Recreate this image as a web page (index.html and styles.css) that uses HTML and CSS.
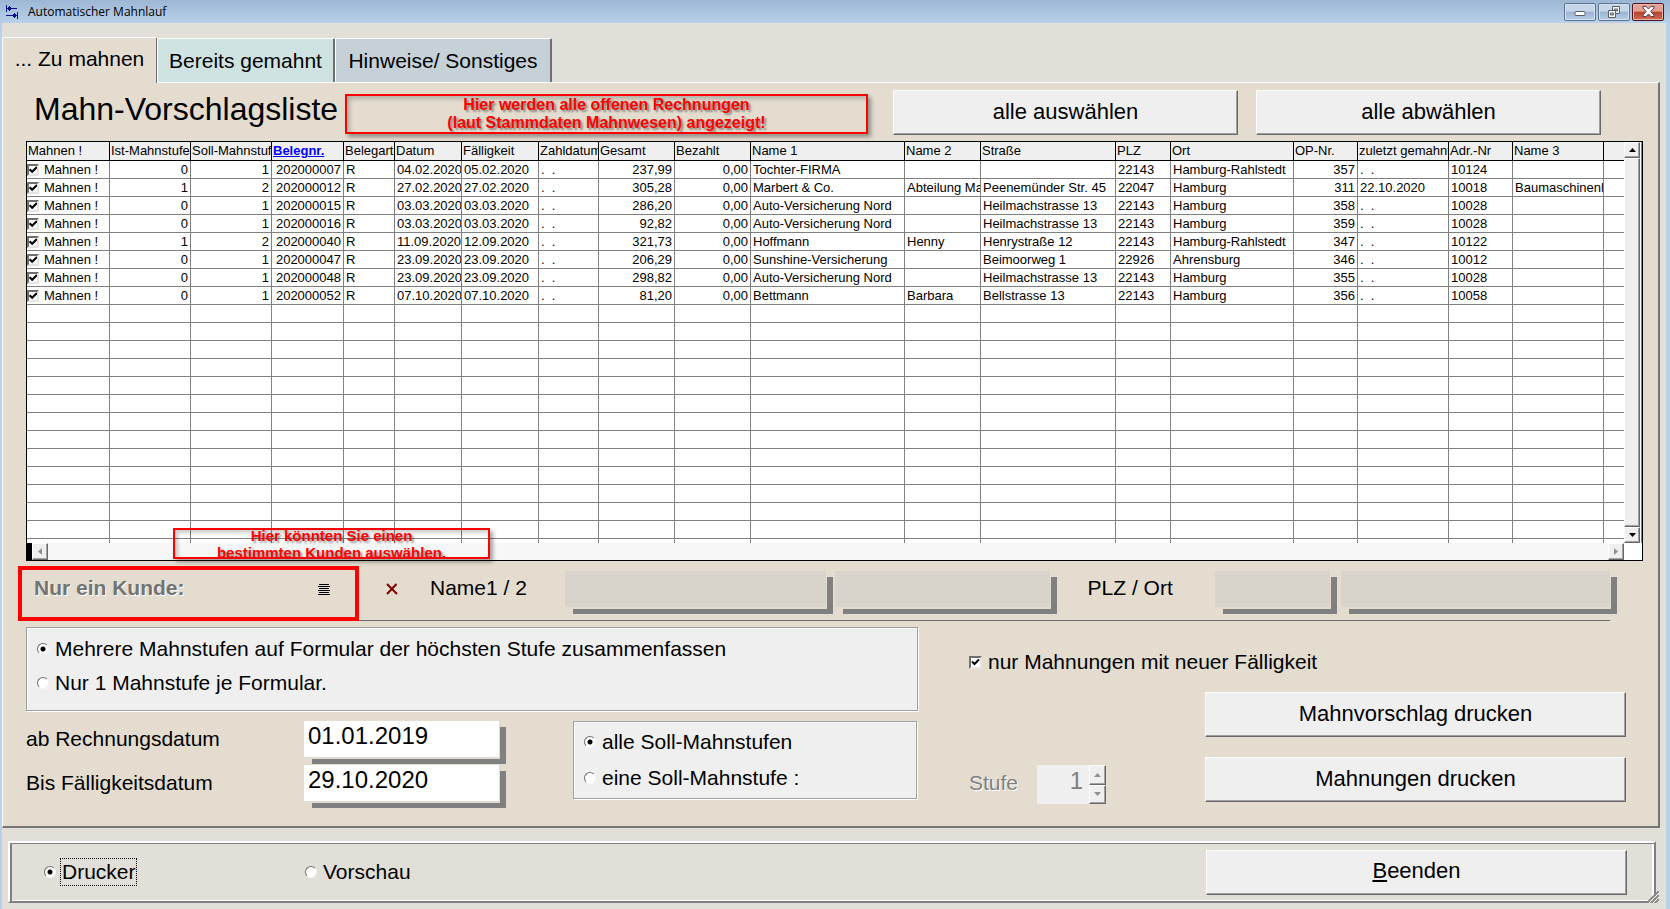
FILE: index.html
```html
<!DOCTYPE html>
<html lang="de">
<head>
<meta charset="utf-8">
<title>Automatischer Mahnlauf</title>
<link rel="stylesheet" href="styles.css">
</head>
<body>
<div class="window">
  <header class="titlebar">
    <svg class="app-icon" width="12" height="14" viewBox="0 0 12 14" fill="#10108c" shape-rendering="crispEdges"><path d="M0 0h1v7H0zM1 3h10v1H1zM2 2h3v3H2zM3 1h1v5H3zM11 7h1v7h-1zM0 10h11v1H0zM7 9h3v3H7zM8 8h1v5H8z"/></svg>
    <span class="title">Automatischer Mahnlauf</span>
    <div class="window-buttons">
      <button class="winbtn" aria-label="Minimieren"><svg width="12" height="12" viewBox="0 0 12 12"><rect x="1" y="5.500" width="10" height="4" rx="1" fill="#fff" stroke="#55606e"/></svg></button>
      <button class="winbtn" aria-label="Wiederherstellen"><svg width="12" height="12" viewBox="0 0 12 12" fill="#fff" stroke="#55606e"><path d="M4.500.5h7v7h-7z"/><path d="M6.500 3h3v2h-3z" fill="#a9c0da"/><path d="M.5 4.500h7v7h-7z"/><path d="M2.500 7h3v2h-3z" fill="#a9c0da"/></svg></button>
      <button class="winbtn winbtn-close" aria-label="Schließen"><svg width="13" height="11" viewBox="0 0 13 11"><path d="M1 .5h3l2.500 2.500L9 .5h3v1.500L8.800 5.500 12 9v1.500H9L6.500 8 4 10.500H1V9l3.200-3.500L1 2z" fill="#fff" stroke="#55404c"/></svg></button>
    </div>
  </header>

  <main class="client">
    <nav class="tabs">
      <button class="tab tab-active">... Zu mahnen</button>
      <button class="tab tab-done">Bereits gemahnt</button>
      <button class="tab tab-notes">Hinweise/ Sonstiges</button>
    </nav>

    <section class="panel">
      <div class="panel-head">
        <h1>Mahn-Vorschlagsliste</h1>
        <p class="callout callout-list">Hier werden alle offenen Rechnungen<br>(laut Stammdaten Mahnwesen) angezeigt!</p>
        <div class="head-buttons">
          <button class="btn">alle auswählen</button>
          <button class="btn">alle abwählen</button>
        </div>
      </div>

      <div class="grid">
        <div class="grid-view">
          <table>
            <colgroup><col class="w83"><col class="w81"><col class="w81"><col class="w72"><col class="w51"><col class="w67"><col class="w77"><col class="w60"><col class="w76"><col class="w76"><col class="w154"><col class="w76"><col class="w135"><col class="w55"><col class="w123"><col class="w64"><col class="w91"><col class="w64"><col class="w91"><col></colgroup>
            <thead>
              <tr><th>Mahnen !<th>Ist-Mahnstufe<th>Soll-Mahnstufe<th><a class="sorted" href="#">Belegnr.</a><th>Belegart<th>Datum<th>Fälligkeit<th>Zahldatum<th>Gesamt<th>Bezahlt<th>Name 1<th>Name 2<th>Straße<th>PLZ<th>Ort<th>OP-Nr.<th>zuletzt gemahnt<th>Adr.-Nr<th>Name 3<th></tr>
            </thead>
            <tbody>
              <tr><td><label class="pick"><input type="checkbox" class="check" checked>Mahnen !</label><td class="num">0<td class="num">1<td class="num">202000007<td>R<td>04.02.2020<td>05.02.2020<td>.&nbsp; .<td class="num">237,99<td class="num">0,00<td>Tochter-FIRMA<td><td><td>22143<td>Hamburg-Rahlstedt<td class="num">357<td>.&nbsp; .<td>10124<td><td></tr>
              <tr><td><label class="pick"><input type="checkbox" class="check" checked>Mahnen !</label><td class="num">1<td class="num">2<td class="num">202000012<td>R<td>27.02.2020<td>27.02.2020<td>.&nbsp; .<td class="num">305,28<td class="num">0,00<td>Marbert &amp; Co.<td>Abteilung Mahn<td>Peenemünder Str. 45<td>22047<td>Hamburg<td class="num">311<td>22.10.2020<td>10018<td>Baumaschinenh<td></tr>
              <tr><td><label class="pick"><input type="checkbox" class="check" checked>Mahnen !</label><td class="num">0<td class="num">1<td class="num">202000015<td>R<td>03.03.2020<td>03.03.2020<td>.&nbsp; .<td class="num">286,20<td class="num">0,00<td>Auto-Versicherung Nord<td><td>Heilmachstrasse 13<td>22143<td>Hamburg<td class="num">358<td>.&nbsp; .<td>10028<td><td></tr>
              <tr><td><label class="pick"><input type="checkbox" class="check" checked>Mahnen !</label><td class="num">0<td class="num">1<td class="num">202000016<td>R<td>03.03.2020<td>03.03.2020<td>.&nbsp; .<td class="num">92,82<td class="num">0,00<td>Auto-Versicherung Nord<td><td>Heilmachstrasse 13<td>22143<td>Hamburg<td class="num">359<td>.&nbsp; .<td>10028<td><td></tr>
              <tr><td><label class="pick"><input type="checkbox" class="check" checked>Mahnen !</label><td class="num">1<td class="num">2<td class="num">202000040<td>R<td>11.09.2020<td>12.09.2020<td>.&nbsp; .<td class="num">321,73<td class="num">0,00<td>Hoffmann<td>Henny<td>Henrystraße 12<td>22143<td>Hamburg-Rahlstedt<td class="num">347<td>.&nbsp; .<td>10122<td><td></tr>
              <tr><td><label class="pick"><input type="checkbox" class="check" checked>Mahnen !</label><td class="num">0<td class="num">1<td class="num">202000047<td>R<td>23.09.2020<td>23.09.2020<td>.&nbsp; .<td class="num">206,29<td class="num">0,00<td>Sunshine-Versicherung<td><td>Beimoorweg 1<td>22926<td>Ahrensburg<td class="num">346<td>.&nbsp; .<td>10012<td><td></tr>
              <tr><td><label class="pick"><input type="checkbox" class="check" checked>Mahnen !</label><td class="num">0<td class="num">1<td class="num">202000048<td>R<td>23.09.2020<td>23.09.2020<td>.&nbsp; .<td class="num">298,82<td class="num">0,00<td>Auto-Versicherung Nord<td><td>Heilmachstrasse 13<td>22143<td>Hamburg<td class="num">355<td>.&nbsp; .<td>10028<td><td></tr>
              <tr><td><label class="pick"><input type="checkbox" class="check" checked>Mahnen !</label><td class="num">0<td class="num">1<td class="num">202000052<td>R<td>07.10.2020<td>07.10.2020<td>.&nbsp; .<td class="num">81,20<td class="num">0,00<td>Bettmann<td>Barbara<td>Bellstrasse 13<td>22143<td>Hamburg<td class="num">356<td>.&nbsp; .<td>10058<td><td></tr>
              <tr><td><td><td><td><td><td><td><td><td><td><td><td><td><td><td><td><td><td><td><td></tr>
              <tr><td><td><td><td><td><td><td><td><td><td><td><td><td><td><td><td><td><td><td><td></tr>
              <tr><td><td><td><td><td><td><td><td><td><td><td><td><td><td><td><td><td><td><td><td></tr>
              <tr><td><td><td><td><td><td><td><td><td><td><td><td><td><td><td><td><td><td><td><td></tr>
              <tr><td><td><td><td><td><td><td><td><td><td><td><td><td><td><td><td><td><td><td><td></tr>
              <tr><td><td><td><td><td><td><td><td><td><td><td><td><td><td><td><td><td><td><td><td></tr>
              <tr><td><td><td><td><td><td><td><td><td><td><td><td><td><td><td><td><td><td><td><td></tr>
              <tr><td><td><td><td><td><td><td><td><td><td><td><td><td><td><td><td><td><td><td><td></tr>
              <tr><td><td><td><td><td><td><td><td><td><td><td><td><td><td><td><td><td><td><td><td></tr>
              <tr><td><td><td><td><td><td><td><td><td><td><td><td><td><td><td><td><td><td><td><td></tr>
              <tr><td><td><td><td><td><td><td><td><td><td><td><td><td><td><td><td><td><td><td><td></tr>
              <tr><td><td><td><td><td><td><td><td><td><td><td><td><td><td><td><td><td><td><td><td></tr>
              <tr><td><td><td><td><td><td><td><td><td><td><td><td><td><td><td><td><td><td><td><td></tr>
              <tr class="stub"><td><td><td><td><td><td><td><td><td><td><td><td><td><td><td><td><td><td><td><td></tr>
            </tbody>
          </table>
        </div>
        <div class="vscroll">
          <button class="arrow" aria-label="Nach oben"><svg width="7" height="4" viewBox="0 0 7 4"><path d="M3.500 0L7 4H0z"/></svg></button>
          <div class="thumb"></div>
          <button class="arrow" aria-label="Nach unten"><svg width="7" height="4" viewBox="0 0 7 4"><path d="M3.500 4L7 0H0z"/></svg></button>
        </div>
        <div class="hscroll">
          <span class="splitter"></span>
          <button class="arrow" aria-label="Nach links" disabled><svg width="4" height="7" viewBox="0 0 4 7"><path d="M0 3.500L4 0v7z"/></svg></button>
          <span class="track"></span>
          <button class="arrow" aria-label="Nach rechts" disabled><svg width="4" height="7" viewBox="0 0 4 7"><path d="M4 3.500L0 0v7z"/></svg></button>
        </div>
        <p class="callout callout-customer">Hier könnten Sie einen<br>bestimmten Kunden auswählen.</p>
      </div>

      <div class="customer">
        <div class="customer-pick">
          <span class="customer-label">Nur ein Kunde:</span>
          <button class="plain" aria-label="Kundenliste"><svg width="12" height="11" viewBox="0 0 12 11" shape-rendering="crispEdges"><path d="M1 0h10v1H1zM0 2h12v1H0zM1 4h10v1H1zM0 6h12v1H0zM1 8h10v1H1zM0 10h12v1H0z"/></svg></button>
        </div>
        <div class="filter">
          <button class="plain" aria-label="Kunde löschen"><svg width="12" height="12" viewBox="0 0 12 12" fill="none" stroke="#800000" stroke-width="2"><path d="M1 1l10 10M10.500 1L1 11"/></svg></button>
          <label for="name1">Name1 / 2</label>
          <span class="field field-name1"><input id="name1" type="text" disabled></span>
          <span class="field field-name2"><input type="text" aria-label="Name 2" disabled></span>
          <label for="plz">PLZ / Ort</label>
          <span class="field field-plz"><input id="plz" type="text" disabled></span>
          <span class="field"><input type="text" aria-label="Ort" disabled></span>
        </div>
      </div>

      <div class="options">
        <div class="options-left">
          <div class="group group-forms">
            <label class="choice"><input type="radio" class="radio" name="form" checked>Mehrere Mahnstufen auf Formular der höchsten Stufe zusammenfassen</label>
            <label class="choice"><input type="radio" class="radio" name="form">Nur 1 Mahnstufe je Formular.</label>
          </div>
          <div class="dates-row">
            <div class="dates">
              <label for="from">ab Rechnungsdatum</label>
              <span class="field"><input id="from" type="text" value="01.01.2019"></span>
              <label for="until">Bis Fälligkeitsdatum</label>
              <span class="field"><input id="until" type="text" value="29.10.2020"></span>
            </div>
            <div class="group group-levels">
              <label class="choice"><input type="radio" class="radio" name="level" checked>alle Soll-Mahnstufen</label>
              <label class="choice"><input type="radio" class="radio" name="level">eine Soll-Mahnstufe :</label>
            </div>
          </div>
        </div>
        <div class="options-right">
          <label class="choice new-due"><input type="checkbox" class="check" checked>nur Mahnungen mit neuer Fälligkeit</label>
          <button class="btn btn-wide">Mahnvorschlag drucken</button>
          <div class="level-row">
            <label class="level-label" for="stufe">Stufe</label>
            <div class="spinner">
              <input id="stufe" type="text" value="1" disabled>
              <div class="spin-buttons">
                <button class="arrow" aria-label="Erhöhen" disabled><svg width="7" height="4" viewBox="0 0 7 4"><path d="M3.500 0L7 4H0z"/></svg></button>
                <button class="arrow" aria-label="Verringern" disabled><svg width="7" height="4" viewBox="0 0 7 4"><path d="M3.500 4L7 0H0z"/></svg></button>
              </div>
            </div>
            <button class="btn btn-wide">Mahnungen drucken</button>
          </div>
        </div>
      </div>
    </section>

    <footer class="footer">
      <label class="choice target"><input type="radio" class="radio" name="target" checked><span class="focused">Drucker</span></label>
      <label class="choice target"><input type="radio" class="radio" name="target">Vorschau</label>
      <button class="btn btn-wide btn-exit"><u>B</u>eenden</button>
      <svg class="grip" width="12" height="12" viewBox="0 0 12 12" fill="none"><path d="M0 12L12 0M4 12l8-8M8 12l4-4" stroke="#8a8a86" stroke-width="2"/><path d="M2 12L12 2M6 12l6-6" stroke="#fff"/></svg>
    </footer>
  </main>
</div>
</body>
</html>
```

FILE: styles.css
```css
* { box-sizing: border-box; }

body {
  margin: 0;
  background: #b9d1ea;
  color: #000;
  font-family: "Liberation Sans", Arial, sans-serif;
  font-size: 21px;
}

button, input { font: inherit; color: inherit; }
button { padding: 0; border: 0; background: none; }

.window {
  display: flex;
  flex-direction: column;
  min-height: 100vh;
  padding: 0 4px 0 2px;
}

/* Title bar */
.titlebar {
  display: flex;
  align-items: center;
  height: 23px;
  margin: 0 -4px 0 -2px;
  padding: 0 6px;
  background: linear-gradient(#9cb6d4, #b8d1ea);
}
.title {
  flex: 1;
  margin-left: 10px;
  font-family: "Open Sans", "Noto Sans", sans-serif;
  font-size: 12px;
}
.window-buttons { display: flex; gap: 2px; }
.winbtn {
  display: flex;
  align-items: center;
  justify-content: center;
  width: 32px;
  height: 18px;
  border: 1px solid #5f7391;
  border-radius: 2px;
  background: linear-gradient(#c5d6e9 45%, #9bb3cf 50%, #b7cfe8);
  box-shadow: inset 0 0 0 1px #d4e2f1;
}
.winbtn-close {
  border-color: #4d1622;
  background: linear-gradient(#e3a095 45%, #b93f28 50%, #cf6c56);
  box-shadow: inset 0 0 0 1px #e8b3a8;
}

/* Client area and tabs */
.client {
  display: flex;
  flex: 1;
  flex-direction: column;
  padding: 14px 6px 6px 0;
  background: #e1dfd7;
}
.tabs {
  display: flex;
  align-items: flex-end;
  position: relative;
  z-index: 1;
  margin-bottom: -1px;
}
.tab {
  height: 44px;
  margin-bottom: 1px;
  border-top: 1px solid #fff;
  border-left: 1px solid #fff;
  border-right: 2px solid #6f6f6f;
  border-radius: 2px 2px 0 0;
}
.tab-active {
  height: 46px;
  width: 155px;
  margin-bottom: 0;
  padding-bottom: 4px;
  border-right-width: 1px;
  background: #e3dccf;
}
.tab-done { width: 178px; background: #cee3e1; }
.tab-notes { width: 217px; background: #c6d0d7; }

.panel {
  display: flex;
  flex-direction: column;
  border: 1px solid #fff;
  border-right: 2px solid #757575;
  border-bottom: 2px solid #757575;
  background: #e3dccf;
}
.panel-head {
  display: flex;
  align-items: flex-start;
  height: 58px;
  padding: 7px 57px 0 31px;
}
h1 {
  width: 311px;
  margin: 0;
  font-size: 32px;
  font-weight: 400;
  line-height: 38px;
  white-space: nowrap;
}
.head-buttons { display: flex; gap: 18px; margin-left: auto; }
.head-buttons .btn { width: 345px; }

.callout {
  display: flex;
  align-items: center;
  justify-content: center;
  margin: 0;
  overflow: hidden;
  border: 2px solid #f00;
  box-shadow: 3px 3px 4px rgba(0, 0, 0, .35), inset 3px 3px 4px rgba(0, 0, 0, .2);
  color: #f00;
  font-size: 16px;
  font-weight: 700;
  line-height: 18px;
  text-align: center;
  text-shadow: 2px 2px 2px rgba(0, 0, 0, .4);
}
.callout-list { width: 523px; height: 40px; margin-top: 4px; }

.btn {
  height: 45px;
  padding-bottom: 2px;
  border: 1px solid;
  border-color: #fff #696969 #696969 #fff;
  background: #efefef;
  box-shadow: inset -1px -1px #a0a0a0;
  font-size: 22px;
}
.btn-wide { width: 421px; }

/* Dunning list */
.grid {
  display: grid;
  position: relative;
  grid-template-columns: minmax(0, 1fr) 18px;
  margin: 0 15px 0 23px;
  border: 1px solid #000;
  background: #fff;
}
.grid-view { overflow: hidden; }
table {
  width: 100%;
  border-collapse: separate;
  border-spacing: 0;
  table-layout: fixed;
  font-size: 13px;
  line-height: 17px;
}
th, td {
  height: 18px;
  padding: 0 2px;
  overflow: hidden;
  border-right: 1px solid #808080;
  border-bottom: 1px solid #808080;
  font-weight: 400;
  text-align: left;
  white-space: nowrap;
}
th {
  height: 19px;
  padding: 0 1px;
  border-color: #000;
  background: #efefef;
  line-height: 18px;
}
th:last-child, td:last-child { border-right: 0; }
.num { text-align: right; }
.stub td { height: 4px; border-bottom: 0; line-height: 4px; }
.sorted { color: #00f; font-weight: 700; }
.w51 { width: 51px; }
.w55 { width: 55px; }
.w60 { width: 60px; }
.w64 { width: 64px; }
.w67 { width: 67px; }
.w72 { width: 72px; }
.w76 { width: 76px; }
.w77 { width: 77px; }
.w81 { width: 81px; }
.w83 { width: 83px; }
.w91 { width: 91px; }
.w123 { width: 123px; }
.w135 { width: 135px; }
.w154 { width: 154px; }

.pick { display: flex; align-items: center; gap: 5px; margin-left: -2px; }

.check {
  flex: none;
  width: 13px;
  height: 13px;
  margin: 0;
  appearance: none;
  border: 2px solid;
  border-color: #6e6e6e #e4e4e4 #e4e4e4 #6e6e6e;
  background: #fff url("data:image/svg+xml,%3Csvg xmlns='http://www.w3.org/2000/svg' viewBox='0 0 9 9'%3E%3Cpath d='M1 3.500L3.500 6 8 1.500' fill='none' stroke='%23000' stroke-width='2'/%3E%3C/svg%3E") center / 9px 9px no-repeat;
}
.pick .check { width: 12px; height: 12px; }
.radio {
  flex: none;
  width: 12px;
  height: 12px;
  margin: 0;
  appearance: none;
  border: 1px solid;
  border-color: #707070 #f8f8f8 #f8f8f8 #707070;
  border-radius: 50%;
  background: #fff;
}
.radio:checked { background: radial-gradient(circle, #000 2px, #fff 3px); }

/* Scroll bars */
.arrow {
  display: flex;
  flex: none;
  align-items: center;
  justify-content: center;
  border: 1px solid;
  border-color: #fff #696969 #696969 #fff;
  background: #efefef;
  box-shadow: inset -1px -1px #a0a0a0;
}
.arrow:disabled { fill: #909090; }
.vscroll {
  display: flex;
  flex-direction: column;
  padding-right: 1px;
  border-right: 1px solid #808080;
}
.vscroll .arrow { height: 16px; }
.thumb {
  flex: 1;
  border: 1px solid;
  border-color: #fff #696969 #696969 #fff;
  background: #efefef;
  box-shadow: inset -1px -1px #a0a0a0;
}
.hscroll { display: flex; height: 17px; }
.hscroll .arrow { width: 16px; }
.splitter { width: 5px; background: #000; }
.track { flex: 1; background: #f7f7f7; }

.callout-customer {
  position: absolute;
  left: 146px;
  bottom: 1px;
  width: 317px;
  height: 31px;
  font-size: 15px;
  line-height: 17px;
}

/* Customer filter */
.customer { display: flex; padding: 5px 48px 0 15px; }
.customer-pick {
  display: flex;
  align-items: center;
  justify-content: space-between;
  flex: none;
  width: 341px;
  height: 55px;
  padding: 0 25px 9px 12px;
  border: 4px solid #f00;
}
.customer-label {
  padding-bottom: 3px;
  color: #737373;
  font-weight: 700;
  text-shadow: 1px 1px #fff;
}
.plain { display: flex; }
.filter {
  display: grid;
  flex: 1;
  grid-template-columns: 44px 135px 270fr 252fr 127px 126fr 269fr;
  align-items: center;
  padding: 0 0 8px 27px;
  border-bottom: 1px solid #6c6c6c;
}
.filter label { padding-bottom: 3px; }
.field-name1 { margin-right: 9px; }
.field-name2 { margin-right: 38px; }
.field-plz { margin-right: 11px; }

.field { display: block; position: relative; height: 36px; }
.field::after {
  content: "";
  position: absolute;
  top: 6px;
  right: -7px;
  bottom: -7px;
  left: 8px;
  border-right: 6px solid #808080;
  border-bottom: 5px solid #808080;
  pointer-events: none;
}
.field input {
  display: block;
  width: 100%;
  height: 36px;
  padding: 0 4px 6px;
  border: 0;
  border-radius: 0;
  background: #fff;
  font-size: 24px;
}
.field input:disabled { background: #d8d4cc; }

/* Options */
.options {
  display: grid;
  grid-template-columns: 892fr 657fr;
  column-gap: 51px;
  padding: 6px 32px 22px 23px;
}
.group {
  display: flex;
  flex-direction: column;
  border: 1px solid #a0a0a0;
  background: #efefef;
  box-shadow: inset 1px 1px #fff, 1px 1px #fff;
}
.choice { display: flex; align-items: center; gap: 6px; white-space: nowrap; }
.group-forms { height: 84px; gap: 10px; padding: 9px 10px; }
.group-levels { width: 344px; height: 78px; gap: 12px; padding: 8px 10px; margin: 0 1px 0 auto; }
.dates-row { display: flex; margin-top: 10px; }
.dates {
  display: grid;
  grid-template-columns: 278px 195px;
  grid-auto-rows: 36px;
  row-gap: 8px;
  align-items: center;
}

.options-right { display: flex; flex-direction: column; }
.new-due { margin: 23px 0 18px; }
.options-right > .btn { align-self: flex-end; }
.level-row { display: flex; margin-top: 20px; }
.level-label {
  width: 68px;
  padding-top: 14px;
  color: #808080;
  text-shadow: 1px 1px #fff;
}
.spinner {
  display: flex;
  width: 69px;
  height: 39px;
  margin-top: 8px;
  background: #efefef;
}
.spinner input {
  flex: 1;
  min-width: 0;
  padding: 0 6px 8px 0;
  border: 0;
  background: none;
  color: #808080;
  font-size: 24px;
  text-align: right;
}
.spin-buttons { display: flex; flex-direction: column; width: 17px; }
.spin-buttons .arrow { flex: 1; }
.level-row .btn { margin-left: auto; }

/* Footer */
.footer {
  display: flex;
  flex: 1;
  align-items: center;
  position: relative;
  margin: 13px 4px 0 6px;
  padding: 0 27px 0 34px;
  border: 2px solid;
  border-color: #fff #808080 #808080 #fff;
  box-shadow: inset 2px 1px #808080, inset -2px -1px #fff;
}
.target { width: 261px; }
.focused { margin-left: -2px; padding: 2px 1px 2px 2px; outline: 1px dotted #000; outline-offset: -1px; }
.btn-exit { margin-left: auto; }
.grip { position: absolute; right: -5px; bottom: -2px; }
```
